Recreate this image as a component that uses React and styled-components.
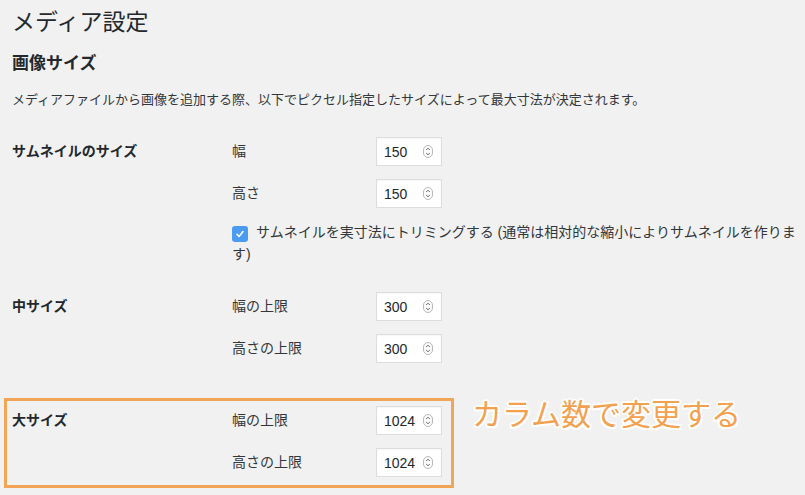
import { styled, createGlobalStyle } from "styled-components"

const GlobalStyle = createGlobalStyle`
    html, body {
        margin: 0;
        padding: 0;
        background: #f1f1f1;
    }

    body {
        font-family: "Liberation Sans", "Noto Sans CJK JP", sans-serif;
        color: #23282d;
    }
`

const SpinIcon = () => (
    <svg width="10" height="13" viewBox="0 0 10 13">
        <rect x="0.5" y="0.5" width="9" height="12" rx="4.5" fill="#fafafa" stroke="#b9b9b9" />
        <path d="M3.2 5 L5 3.2 L6.8 5" fill="none" stroke="#555" strokeWidth="0.9" />
        <path d="M3.2 8 L5 9.8 L6.8 8" fill="none" stroke="#555" strokeWidth="0.9" />
    </svg>
)

const CheckIcon = () => (
    <svg width="10" height="10" viewBox="0 0 10 10">
        <path d="M2 5.3 L4.1 7.4 L8 2.6" fill="none" stroke="#fff" strokeWidth="1.6" strokeLinecap="round" strokeLinejoin="round" />
    </svg>
)

const NumberField = ({ label, value }) => (
    <Field>
        <SubLabel>{label}</SubLabel>
        <NumberBox>
            <span>{value}</span>
            <SpinIcon />
        </NumberBox>
    </Field>
)

const App = () => {
    return (
        <>
            <GlobalStyle />
            <Page>
                <Title>メディア設定</Title>
                <Heading>画像サイズ</Heading>
                <Description>
                    メディアファイルから画像を追加する際、以下でピクセル指定したサイズによって最大寸法が決定されます。
                </Description>

                <Row $top={27}>
                    <RowLabel>サムネイルのサイズ</RowLabel>
                    <Fields>
                        <NumberField label="幅" value="150" />
                        <NumberField label="高さ" value="150" />
                        <CheckLine>
                            <Checkbox><CheckIcon /></Checkbox>
                            サムネイルを実寸法にトリミングする (通常は相対的な縮小によりサムネイルを作ります)
                        </CheckLine>
                    </Fields>
                </Row>

                <Row $top={27}>
                    <RowLabel>中サイズ</RowLabel>
                    <Fields>
                        <NumberField label="幅の上限" value="300" />
                        <NumberField label="高さの上限" value="300" />
                    </Fields>
                </Row>

                <Highlight>
                    <Row>
                        <RowLabel>大サイズ</RowLabel>
                        <Fields>
                            <NumberField label="幅の上限" value="1024" />
                            <NumberField label="高さの上限" value="1024" />
                        </Fields>
                    </Row>
                    <Callout>カラム数で変更する</Callout>
                </Highlight>
            </Page>
        </>
    )
}

const Page = styled.div`
    padding: 0 3px 0 12px;
`

const Title = styled.h1`
    margin: 0;
    padding-top: 8px;
    font-size: 23px;
    font-weight: 400;
    line-height: 29px;
    color: #23282d;
`

const Heading = styled.h2`
    margin: 16px 0 0;
    font-size: 17px;
    font-weight: 700;
    line-height: 22px;
`

const Description = styled.p`
    margin: 15px 0 0;
    font-size: 13px;
    line-height: 20px;
    color: #32373c;
`

const Row = styled.div`
    display: grid;
    grid-template-columns: 220px 1fr;
    margin-top: ${(p) => p.$top || 0}px;
`

/* orange frame drawn around the large-size settings */
const Highlight = styled.div`
    position: relative;
    box-sizing: border-box;
    width: 450px;
    margin: 35px 0 0 -8px;
    padding: 5px 0 8px 5px;
    border: 3px solid #f2a556;
`

const RowLabel = styled.div`
    font-size: 14px;
    font-weight: 700;
    line-height: 29px;
`

const Fields = styled.div`
    display: flex;
    flex-direction: column;
    gap: 13px;
`

const Field = styled.div`
    display: grid;
    grid-template-columns: 144px 66px;
    align-items: center;
`

const SubLabel = styled.span`
    font-size: 14px;
    line-height: 29px;
    color: #32373c;
`

const NumberBox = styled.div`
    display: flex;
    align-items: center;
    justify-content: space-between;
    box-sizing: border-box;
    height: 29px;
    padding: 0 8px 0 7px;
    background: #fff;
    border: 1px solid #dddddd;
    box-shadow: inset 0 1px 2px rgba(0, 0, 0, 0.04);
    font-size: 14px;
    color: #23282d;
`

const CheckLine = styled.div`
    font-size: 14px;
    line-height: 22px;
    color: #32373c;
`

const Checkbox = styled.span`
    display: inline-flex;
    align-items: center;
    justify-content: center;
    width: 16px;
    height: 16px;
    margin-right: 8px;
    vertical-align: -2px;
    border-radius: 3px;
    background: #4b9bf2;
`

const Callout = styled.div`
    position: absolute;
    left: 465px;
    top: -7px;
    font-family: "Noto Sans CJK JP", sans-serif;
    font-size: 30px;
    line-height: 36px;
    color: #f3a14f;
    white-space: nowrap;
    text-shadow:
        2px 0 0 #fff, -2px 0 0 #fff, 0 2px 0 #fff, 0 -2px 0 #fff,
        1.5px 1.5px 0 #fff, -1.5px 1.5px 0 #fff, 1.5px -1.5px 0 #fff, -1.5px -1.5px 0 #fff;
`

export default App
